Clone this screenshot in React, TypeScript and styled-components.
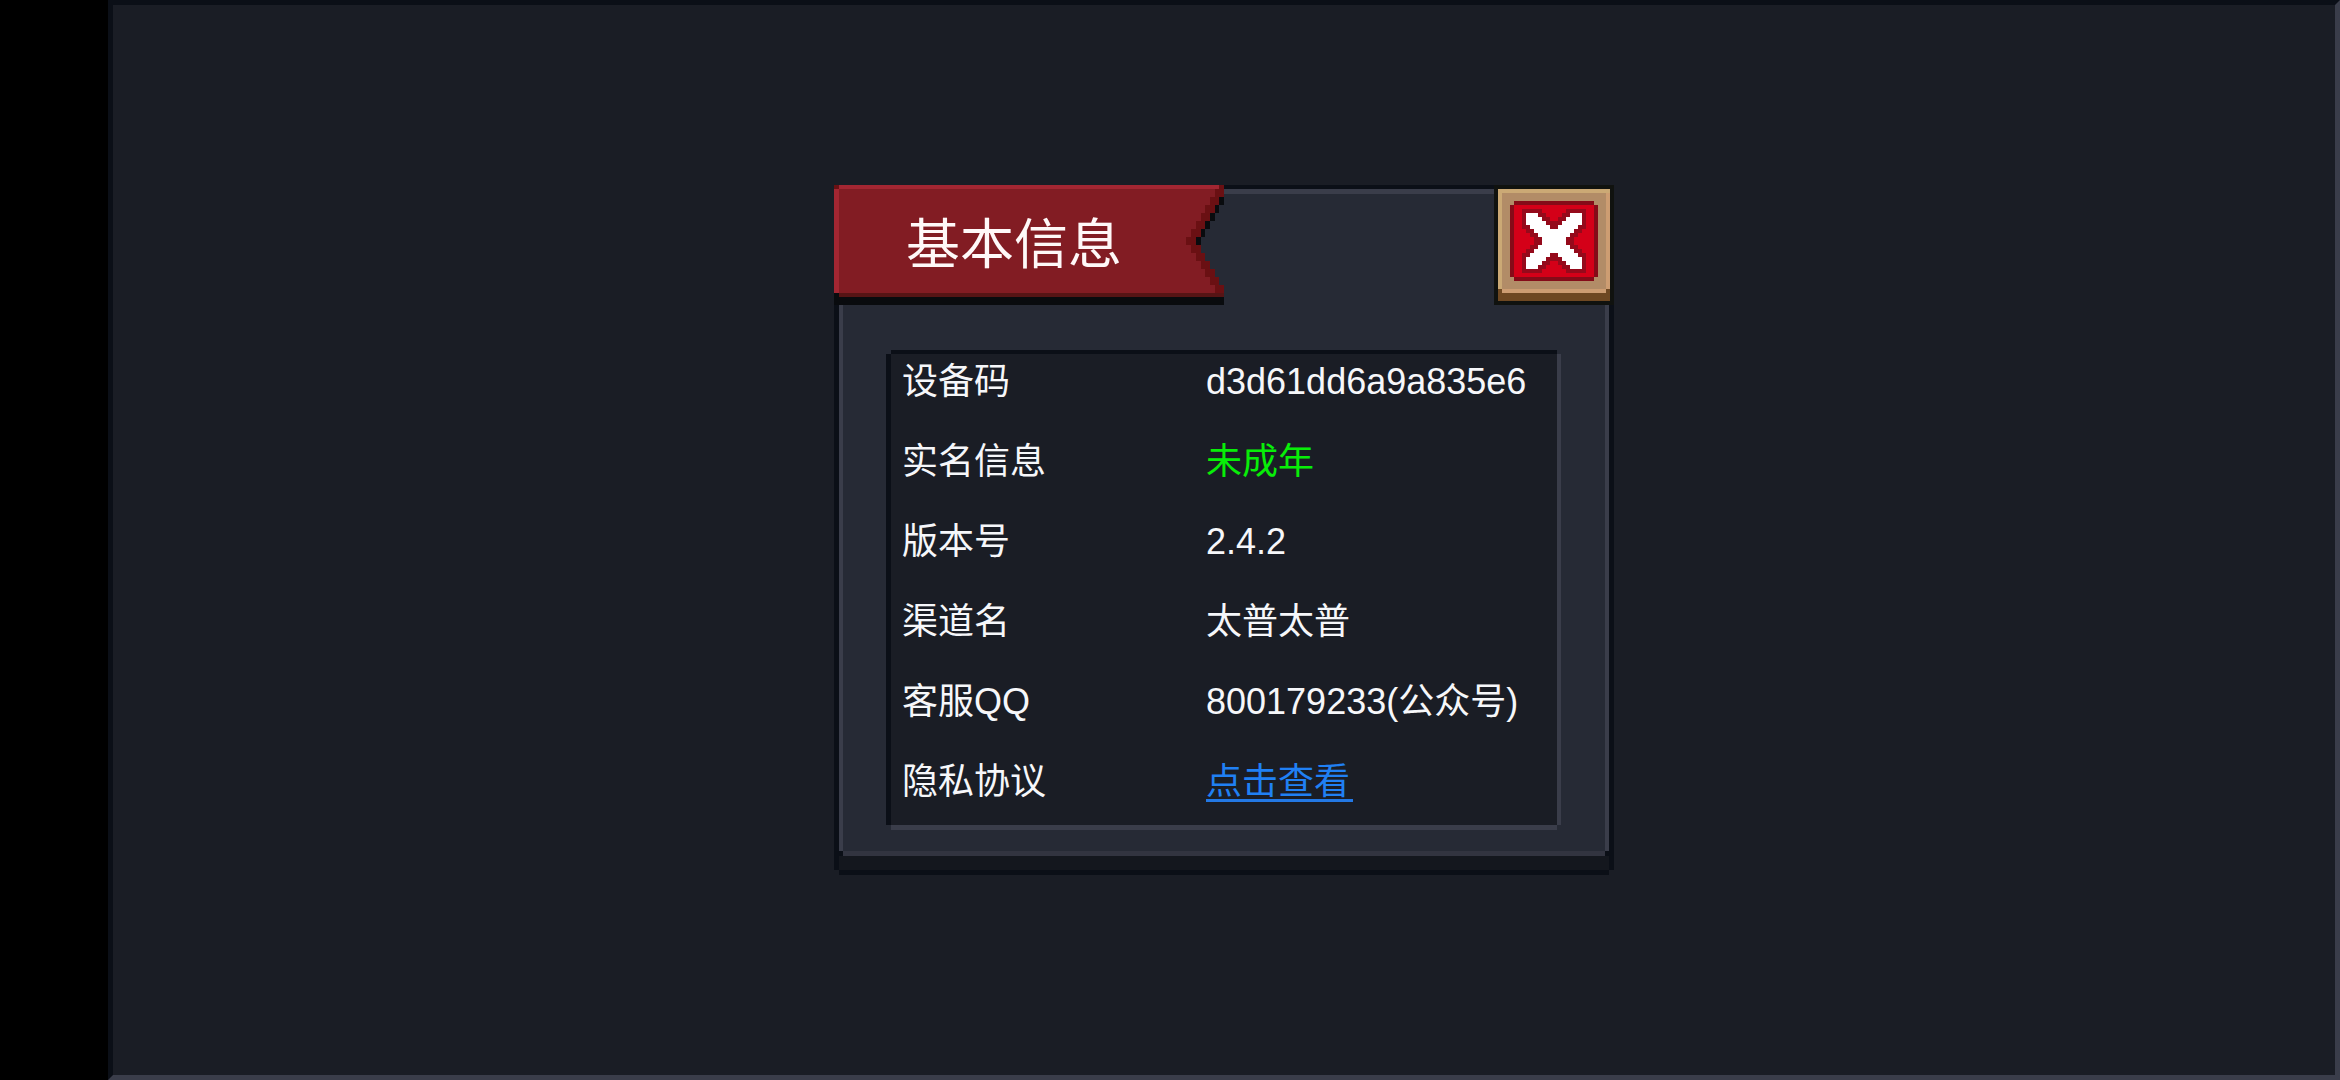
import React from "react";
import styled, { createGlobalStyle } from "styled-components";

const color = {
  page: "#1a1d25",
  panel: "#262a35",
  outline: "#0b0f17",
  edge: "#3a3d4a",
  skirt: "#14171e",
  bannerFill: "#821c23",
  bannerLight: "#a32632",
  bannerDark: "#6a1013",
  bannerBase: "#561415",
  shadow: "#090b0e",
};

const GlobalStyle = createGlobalStyle`
  *, *::before, *::after { box-sizing: border-box; }
  body {
    margin: 0;
    background: #000;
    font-family: "Liberation Sans", "Noto Sans CJK SC", sans-serif;
  }
`;

const Screen = styled.div`
  display: flex;
  min-height: 100vh;
  padding-left: 108px;
  background: #000;
`;

const Stage = styled.main`
  flex: 1;
  display: flex;
  align-items: center;
  justify-content: center;
  padding-bottom: 21px;
  background: ${color.page};
  border: 5px solid;
  border-color: ${color.outline} ${color.edge} ${color.edge} ${color.outline};
`;

const Dialog = styled.section`
  width: 770px;
  max-width: 100%;
  padding-bottom: 14px;
  background: ${color.skirt};
  box-shadow:
    -5px 0 ${color.outline},
    5px 0 ${color.outline},
    0 -4px ${color.outline},
    0 5px ${color.outline};
`;

const Panel = styled.div`
  display: flow-root;
  background:
    linear-gradient(${color.outline}, ${color.outline}) left bottom / 4px 5px no-repeat,
    linear-gradient(${color.outline}, ${color.outline}) right bottom / 4px 5px no-repeat,
    linear-gradient(${color.edge}, ${color.edge}) left / 4px 100% no-repeat,
    linear-gradient(${color.edge}, ${color.edge}) right / 4px 100% no-repeat,
    linear-gradient(${color.edge}, ${color.edge}) top / 100% 5px no-repeat,
    linear-gradient(#323440, #323440) bottom / 100% 5px no-repeat,
    ${color.panel};
`;

const Header = styled.header`
  display: flex;
  align-items: flex-start;
  justify-content: space-between;
  margin: -4px -5px 0;
`;

const Banner = styled.div`
  display: flex;
  height: 120px;
`;

const BannerTitle = styled.h1`
  width: 352px;
  margin: 0;
  padding: 4px 0 0 72px;
  background:
    linear-gradient(${color.shadow}, ${color.shadow}) bottom / 100% 8px no-repeat,
    linear-gradient(${color.shadow}, ${color.shadow}) left bottom / 5px 12px no-repeat,
    linear-gradient(${color.bannerDark}, ${color.bannerDark}) left top / 5px 4px no-repeat,
    linear-gradient(${color.bannerBase}, ${color.bannerBase}) bottom / 100% 12px no-repeat,
    linear-gradient(${color.bannerLight}, ${color.bannerLight}) top / 100% 4px no-repeat,
    linear-gradient(${color.bannerLight}, ${color.bannerLight}) left / 5px 100% no-repeat,
    ${color.bannerFill};
  color: #fff8f8;
  font-size: 54px;
  font-weight: 400;
  line-height: 112px;
  white-space: nowrap;
`;

const CloseButton = styled.button`
  width: 120px;
  height: 120px;
  padding: 0;
  border: 4px solid #10120f;
  background: #b28c67;
  cursor: pointer;

  svg { display: block; }
`;

const InfoBox = styled.dl`
  display: grid;
  grid-template-columns: 304px 1fr;
  row-gap: 28px;
  margin: 49px 52px 31px;
  padding: 2px 0 17px 11px;
  background: ${color.page};
  box-shadow:
    -5px 0 ${color.outline},
    0 -4px ${color.outline},
    4px 0 ${color.edge},
    0 5px ${color.edge};
  color: #f6f7fa;
  font-size: 36px;
  line-height: 52px;
  white-space: nowrap;
`;

const Label = styled.dt`
  margin: 0;
`;

const Value = styled.dd<{ $tone?: string }>`
  margin: 0;
  color: ${(p) => p.$tone ?? "inherit"};
`;

const PolicyLink = styled.a`
  display: block;
  width: max-content;
  height: 46px;
  padding-right: 3px;
  border-bottom: 3px solid #2378e4;
  color: #2080f4;
  text-decoration: none;
`;

// Column edges of the ribbon tail, from its innermost step outwards.
const steps = [0, 5, 10, 15, 19, 24, 29, 33, 38];

function BannerTail() {
  const upper = [0, 1, 2, 3, 4, 5, 6];
  const lower = [0, 1, 2, 3, 4, 5];
  return (
    <svg width="38" height="120" viewBox="0 0 38 120" shapeRendering="crispEdges" aria-hidden="true">
      <rect width="33" height="4" fill={color.bannerLight} />
      <rect x="33" width="5" height="4" fill={color.bannerDark} />
      {upper.map((i) => {
        const y = 4 + i * 8;
        const start = steps[6 - i];
        const end = steps[8 - i];
        return (
          <g key={i}>
            <rect y={y} width={start} height="8" fill={color.bannerFill} />
            <rect x={start} y={y} width={end - start} height="8" fill={color.bannerDark} />
            {i > 0 && <rect x={end} y={y} width={steps[9 - i] - end} height="8" fill={color.shadow} />}
          </g>
        );
      })}
      {lower.map((i) => {
        const y = 60 + i * 8;
        const start = steps[i + 1];
        return (
          <g key={i}>
            <rect y={y} width={start} height="8" fill={color.bannerFill} />
            <rect x={start} y={y} width={steps[i + 3] - start} height="8" fill={color.bannerDark} />
          </g>
        );
      })}
      <rect y="108" width="38" height="4" fill={color.bannerBase} />
      <rect y="112" width="38" height="8" fill={color.shadow} />
    </svg>
  );
}

// Filled cells of each cross row as [first column, length].
const crossTop: number[][][] = [
  [[0, 3], [11, 3]],
  [[0, 4], [10, 4]],
  [[0, 5], [9, 5]],
  [[1, 5], [8, 5]],
  [[2, 10]],
  [[3, 8]],
  [[4, 6]],
];
const cross = [...crossTop, ...[...crossTop].reverse()];

function CloseIcon() {
  return (
    <svg width="112" height="112" viewBox="0 0 28 28" shapeRendering="crispEdges" aria-hidden="true">
      <rect width="28" height="28" fill="#6e4822" />
      <rect width="28" height="25" fill="#cba975" />
      <rect x="27" y="1" width="1" height="24" fill="#cd9d72" />
      <rect x="1" y="25" width="26" height="1" fill="#cd9d72" />
      <rect x="1" y="1" width="26" height="24" fill="#b28c67" />
      <rect x="4" y="3" width="20" height="20" fill="#850b18" />
      <rect x="3" y="4" width="22" height="18" fill="#850b18" />
      <rect x="4" y="4" width="20" height="18" fill="#d40018" />
      {cross.map((row, y) =>
        row.map(([x, w]) => (
          <rect key={`o${x}-${y}`} x={6 + x} y={5 + y} width={w + 2} height="3" fill="#950a1b" />
        ))
      )}
      {cross.map((row, y) =>
        row.map(([x, w]) => <rect key={`${x}-${y}`} x={7 + x} y={6 + y} width={w} height="1" fill="#fff" />)
      )}
    </svg>
  );
}

export default function App() {
  return (
    <Screen>
      <GlobalStyle />
      <Stage>
        <Dialog role="dialog" aria-labelledby="dialog-title">
          <Panel>
            <Header>
              <Banner>
                <BannerTitle id="dialog-title">基本信息</BannerTitle>
                <BannerTail />
              </Banner>
              <CloseButton type="button" aria-label="关闭">
                <CloseIcon />
              </CloseButton>
            </Header>
            <InfoBox>
              <Label>设备码</Label>
              <Value>d3d61dd6a9a835e6</Value>
              <Label>实名信息</Label>
              <Value $tone="#08ee08">未成年</Value>
              <Label>版本号</Label>
              <Value>2.4.2</Value>
              <Label>渠道名</Label>
              <Value>太普太普</Value>
              <Label>客服QQ</Label>
              <Value>800179233(公众号)</Value>
              <Label>隐私协议</Label>
              <Value>
                <PolicyLink href="#privacy">点击查看</PolicyLink>
              </Value>
            </InfoBox>
          </Panel>
        </Dialog>
      </Stage>
    </Screen>
  );
}
